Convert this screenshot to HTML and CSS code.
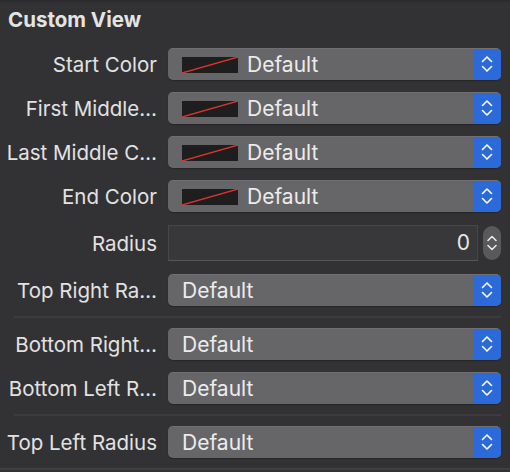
FILE: index.html
```html
<!DOCTYPE html>
<html>
<head>
<meta charset="utf-8">
<link rel="stylesheet" href="styles.css">
</head>
<body>
<div class="panel">
  <div class="title">Custom View</div>
  <div class="rows">
    <div class="row">
      <div class="label">Start Color</div>
      <div class="popup"><span class="swatch"><svg viewBox="0 0 56 16" width="56" height="16"><line x1="0" y1="16" x2="56" y2="0" stroke="#e0352f" stroke-width="1.3"/></svg></span><span class="ptext">Default</span><span class="arrows"><svg viewBox="0 0 12 18" width="12" height="18"><path d="M1.5 6.5 L6 2 L10.5 6.5 M1.5 11.5 L6 16 L10.5 11.5" fill="none" stroke="#fff" stroke-width="1.6" stroke-linecap="round" stroke-linejoin="round"/></svg></span></div>
    </div>
    <div class="row">
      <div class="label">First Middle…</div>
      <div class="popup"><span class="swatch"><svg viewBox="0 0 56 16" width="56" height="16"><line x1="0" y1="16" x2="56" y2="0" stroke="#e0352f" stroke-width="1.3"/></svg></span><span class="ptext">Default</span><span class="arrows"><svg viewBox="0 0 12 18" width="12" height="18"><path d="M1.5 6.5 L6 2 L10.5 6.5 M1.5 11.5 L6 16 L10.5 11.5" fill="none" stroke="#fff" stroke-width="1.6" stroke-linecap="round" stroke-linejoin="round"/></svg></span></div>
    </div>
    <div class="row">
      <div class="label">Last Middle C…</div>
      <div class="popup"><span class="swatch"><svg viewBox="0 0 56 16" width="56" height="16"><line x1="0" y1="16" x2="56" y2="0" stroke="#e0352f" stroke-width="1.3"/></svg></span><span class="ptext">Default</span><span class="arrows"><svg viewBox="0 0 12 18" width="12" height="18"><path d="M1.5 6.5 L6 2 L10.5 6.5 M1.5 11.5 L6 16 L10.5 11.5" fill="none" stroke="#fff" stroke-width="1.6" stroke-linecap="round" stroke-linejoin="round"/></svg></span></div>
    </div>
    <div class="row">
      <div class="label">End Color</div>
      <div class="popup"><span class="swatch"><svg viewBox="0 0 56 16" width="56" height="16"><line x1="0" y1="16" x2="56" y2="0" stroke="#e0352f" stroke-width="1.3"/></svg></span><span class="ptext">Default</span><span class="arrows"><svg viewBox="0 0 12 18" width="12" height="18"><path d="M1.5 6.5 L6 2 L10.5 6.5 M1.5 11.5 L6 16 L10.5 11.5" fill="none" stroke="#fff" stroke-width="1.6" stroke-linecap="round" stroke-linejoin="round"/></svg></span></div>
    </div>
    <div class="row row-tall">
      <div class="label">Radius</div>
      <div class="stepper-wrap">
        <div class="field">0</div>
        <div class="stepper"><svg viewBox="0 0 12 18" width="12" height="18"><path d="M2 6.5 L6 2.5 L10 6.5 M2 11.5 L6 15.5 L10 11.5" fill="none" stroke="#e8e8e8" stroke-width="1.6" stroke-linecap="round" stroke-linejoin="round"/></svg></div>
      </div>
    </div>
    <div class="row">
      <div class="label">Top Right Ra…</div>
      <div class="popup"><span class="ptext plain">Default</span><span class="arrows"><svg viewBox="0 0 12 18" width="12" height="18"><path d="M1.5 6.5 L6 2 L10.5 6.5 M1.5 11.5 L6 16 L10.5 11.5" fill="none" stroke="#fff" stroke-width="1.6" stroke-linecap="round" stroke-linejoin="round"/></svg></span></div>
    </div>
    <div class="sep"></div>
    <div class="row">
      <div class="label">Bottom Right…</div>
      <div class="popup"><span class="ptext plain">Default</span><span class="arrows"><svg viewBox="0 0 12 18" width="12" height="18"><path d="M1.5 6.5 L6 2 L10.5 6.5 M1.5 11.5 L6 16 L10.5 11.5" fill="none" stroke="#fff" stroke-width="1.6" stroke-linecap="round" stroke-linejoin="round"/></svg></span></div>
    </div>
    <div class="row">
      <div class="label">Bottom Left R…</div>
      <div class="popup"><span class="ptext plain">Default</span><span class="arrows"><svg viewBox="0 0 12 18" width="12" height="18"><path d="M1.5 6.5 L6 2 L10.5 6.5 M1.5 11.5 L6 16 L10.5 11.5" fill="none" stroke="#fff" stroke-width="1.6" stroke-linecap="round" stroke-linejoin="round"/></svg></span></div>
    </div>
    <div class="sep"></div>
    <div class="row">
      <div class="label">Top Left Radius</div>
      <div class="popup"><span class="ptext plain">Default</span><span class="arrows"><svg viewBox="0 0 12 18" width="12" height="18"><path d="M1.5 6.5 L6 2 L10.5 6.5 M1.5 11.5 L6 16 L10.5 11.5" fill="none" stroke="#fff" stroke-width="1.6" stroke-linecap="round" stroke-linejoin="round"/></svg></span></div>
    </div>
  </div>
  <div class="bottom-line"></div>
</div>
</body>
</html>
```

FILE: styles.css
```css
html, body {
  margin: 0;
  padding: 0;
  background: #323235;
  width: 510px;
  height: 472px;
  overflow: hidden;
}

.panel {
  font-family: Inter, "Liberation Sans", sans-serif;
  color: #e6e6e6;
  border-top: 2px solid #2b2b2e;
}

.title {
  font-size: 20.5px;
  font-weight: 700;
  padding-left: 8px;
  height: 28px;
  line-height: 24px;
  padding-top: 6px;
  color: #e4e4e4;
}

.rows {
  display: flex;
  flex-direction: column;
  gap: 12px;
  padding-top: 12px;
  padding-right: 9px;
}

.row {
  display: flex;
  align-items: center;
  height: 32px;
}

.row-tall {
  height: 38px;
}

.label {
  width: 157px;
  flex: 0 0 157px;
  text-align: right;
  font-size: 20.5px;
  white-space: nowrap;
  margin-right: 11px;
  color: #e2e2e2;
}

.popup {
  flex: 1;
  height: 32px;
  box-sizing: border-box;
  background: #666668;
  border-radius: 5px;
  border-top: 1px solid #707072;
  display: flex;
  align-items: center;
  overflow: hidden;
  box-shadow: 0 1px 1px rgba(0,0,0,0.25);
}

.swatch {
  width: 56px;
  height: 16px;
  background: #1e1e1e;
  margin-left: 14px;
  margin-right: 9px;
  display: flex;
}

.ptext {
  flex: 1;
  font-size: 21px;
  color: #ececec;
}

.ptext.plain {
  padding-left: 14px;
}

.arrows {
  width: 28px;
  align-self: stretch;
  margin-top: -1px;
  background: #2d6ad9;
  display: flex;
  align-items: center;
  justify-content: center;
}

.stepper-wrap {
  flex: 1;
  display: flex;
  align-items: center;
  gap: 5px;
}

.field {
  flex: 1;
  height: 36px;
  box-sizing: border-box;
  background: #38383b;
  border: 1px solid #47474a;
  border-bottom-color: #56565a;
  text-align: right;
  font-size: 21px;
  line-height: 34px;
  padding-right: 7px;
  color: #e8e8e8;
}

.stepper {
  width: 18px;
  height: 34px;
  border-radius: 9px;
  background: #59595c;
  display: flex;
  align-items: center;
  justify-content: center;
}

.sep {
  height: 2px;
  background: #3c3c40;
  margin: -2px 0 -2px 14px;
}

.bottom-line {
  height: 2px;
  background: #3e3e42;
  margin-top: 10px;
}
```
